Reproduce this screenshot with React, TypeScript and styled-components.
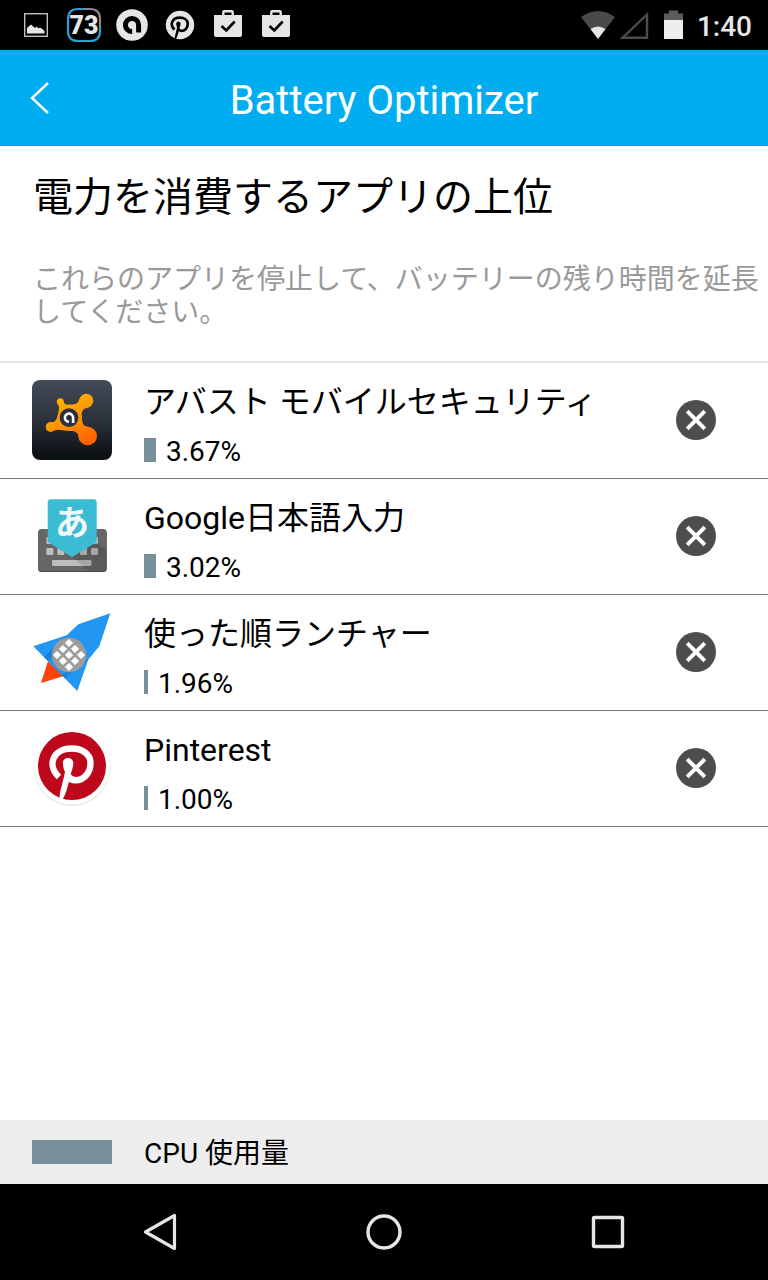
import React from "react";
import styled, { createGlobalStyle } from "styled-components";

const GlobalStyle = createGlobalStyle`
  *, *::before, *::after { box-sizing: border-box; }
  body {
    margin: 0;
    background: #fff;
    color: #000;
    font-family: Roboto, "Noto Sans CJK JP", sans-serif;
  }
  h1, h2, p, ul { margin: 0; padding: 0; font-weight: 400; }
  button { border: 0; padding: 0; background: none; color: inherit; font: inherit; cursor: pointer; }
  svg { display: block; }
`;

const Page = styled.div`
  display: flex;
  flex-direction: column;
  min-height: 100vh;
`;

const StatusBar = styled.div`
  display: flex;
  align-items: center;
  justify-content: space-between;
  height: 50px;
  padding: 0 16px 0 12px;
  background: #000;
  color: #e6e6e6;
`;

const StatusGroup = styled.div<{ $gap?: number }>`
  display: flex;
  align-items: center;
  gap: ${({ $gap = 0 }) => $gap}px;
`;

const StatusIcon = styled.svg`
  width: 48px;
  height: 48px;
`;

const Clock = styled.time`
  padding-top: 4px;
  font-size: 28px;
  font-weight: 500;
  line-height: 32px;
`;

const AppBar = styled.header`
  display: grid;
  grid-template-columns: 80px 1fr 80px;
  align-items: center;
  height: 96px;
  background: #00adf0;
  color: #fff;
`;

const BackButton = styled.button`
  width: 80px;
  height: 96px;
`;

const BarTitle = styled.h1`
  padding-top: 6px;
  font-size: 40px;
  line-height: 48px;
  text-align: center;
`;

const Intro = styled.section`
  padding: 24px 0 32px 33px;
  border-bottom: 2px solid #e6e6e6;
`;

const IntroTitle = styled.h2`
  font-size: 40px;
  line-height: 56px;
`;

const IntroText = styled.p`
  margin-top: 37px;
  color: #999;
  font-size: 28px;
  line-height: 33px;
`;

const AppList = styled.ul`
  flex: 1;
  list-style: none;
`;

const AppRow = styled.li`
  display: flex;
  align-items: center;
  height: 116px;
  padding: 0 52px 2px 32px;
  border-bottom: 1px solid #777;
`;

const AppIcon = styled.svg`
  flex: none;
  width: 80px;
  height: 80px;
`;

const AppInfo = styled.div`
  flex: 1;
  min-width: 0;
  padding: 10px 16px 0 32px;
`;

const AppName = styled.div`
  font-size: 32px;
  line-height: 48px;
`;

const Usage = styled.div`
  display: flex;
  align-items: flex-start;
  gap: 10px;
  margin-top: 6px;
  font-size: 28px;
  line-height: 40px;
`;

const UsageBar = styled.span`
  height: 24px;
  margin-top: 6px;
  background: #78909a;
`;

const StopButton = styled.button`
  flex: none;
  width: 40px;
  height: 40px;
`;

const Legend = styled.footer`
  display: flex;
  align-items: center;
  gap: 32px;
  height: 64px;
  padding: 0 32px;
  background: #eee;
`;

const LegendSwatch = styled.span`
  width: 80px;
  height: 24px;
  background: #78909a;
`;

const LegendLabel = styled.span`
  padding-top: 4px;
  font-size: 28px;
  line-height: 40px;
`;

const NavBar = styled.nav`
  display: flex;
  height: 96px;
  padding: 0 48px;
  background: #000;
`;

const NavButton = styled.button`
  display: flex;
  flex: 1;
  align-items: center;
  justify-content: center;
`;

const PinGlyph = ({ color }: { color: string }) => (
  <>
    <path
      d="M27 49C15 38 20 20.5 39.7 20.5C50 20.5 58.5 26 58.5 35C58.5 46 51 52.3 43.5 52.3C39.5 52.3 37.5 50.5 36 48"
      fill="none"
      stroke={color}
      strokeWidth="6.4"
    />
    <path
      d="M31 36C30 28.5 41 28 41.3 35C41.3 40 39 44 38 49C36 58 34 66 31 70.5C29.5 72 27.4 71.5 27.5 69C28 62 31 54 33 44C32 42 31.2 39 31 36Z"
      fill={color}
    />
  </>
);

const AvastIcon = () => (
  <AppIcon viewBox="0 0 80 80" aria-hidden="true">
    <defs>
      <linearGradient id="avast-bg" x1="0" y1="0" x2="0" y2="1">
        <stop offset="0" stopColor="#454b59" />
        <stop offset="0.5" stopColor="#2b323b" />
        <stop offset="1" stopColor="#080d10" />
      </linearGradient>
      <linearGradient id="avast-body" gradientUnits="userSpaceOnUse" x1="30" y1="16" x2="52" y2="64">
        <stop offset="0" stopColor="#ffb400" />
        <stop offset="0.5" stopColor="#ff9300" />
        <stop offset="1" stopColor="#ff6000" />
      </linearGradient>
    </defs>
    <rect width="80" height="80" rx="8" fill="url(#avast-bg)" />
    <g fill="url(#avast-body)">
      <circle cx="54.3" cy="20.7" r="7" />
      <circle cx="55.7" cy="56" r="9.3" />
      <circle cx="18.7" cy="47" r="5" />
      <circle cx="28.3" cy="21.8" r="3.5" />
      <path d="M31.7 21C31.8 25 35 24.8 40 24.5C46 24.5 46.5 21 48 18L57 27.2C51 28.5 49 31 50 37C50 43 51 46.5 57 46.8L46.5 57C46.5 52 42 50.5 37 51C31 51 26 48.5 22 50.7L19 42C24 43 25 38 26 34C27.5 29 27.5 26 25.4 23.5Z" />
    </g>
    <circle cx="37" cy="37.7" r="9.4" fill="#29303b" />
    <path d="M37 41.8A4.1 4.1 0 1 1 41.1 37.4V43" fill="none" stroke="#fff" strokeWidth="2.6" />
  </AppIcon>
);

const KeyboardIcon = () => (
  <AppIcon viewBox="0 0 80 80" aria-hidden="true">
    <rect x="6" y="34" width="68.7" height="42" rx="3.5" fill="#484848" />
    <rect x="6" y="33" width="68.7" height="42" rx="3.5" fill="#666" />
    <g fill="#bdbdbd">
      {[14.3, 25.3, 36.3, 48, 59].map((x) => (
        <React.Fragment key={x}>
          <rect x={x} y="41" width="7" height="7" rx="1" />
          <rect x={x} y="52" width="7" height="7" rx="1" />
        </React.Fragment>
      ))}
      <rect x="20" y="64" width="39.4" height="6" rx="1" />
    </g>
    <path d="M40 61L64.7 46L74.7 55V75H57Z" fill="#000" opacity="0.12" />
    <path d="M18.7 3.3H61.7Q64.7 3.3 64.7 6.3V44.5Q64.7 46 63 47L40 61L17.4 47Q15.7 46 15.7 44.5V6.3Q15.7 3.3 18.7 3.3Z" fill="#3bbcd2" />
    <text x="40" y="39" textAnchor="middle" fontFamily='"Noto Sans CJK JP", sans-serif' fontSize="34" fontWeight="700" fill="#f1f8fa">
      あ
    </text>
  </AppIcon>
);

const diamonds = [
  [37, 31], [31, 37], [43, 37],
  [25, 43], [37, 43], [49, 43],
  [31, 49], [43, 49], [37, 55],
];

const RocketIcon = () => (
  <AppIcon viewBox="0 0 80 80" aria-hidden="true">
    <path d="M16 49L9 71L32 64Z" fill="#ff4306" />
    <path d="M78.3 1.3L46.3 12.3L34.7 23.3L1.3 34.3L45.3 79L56.3 47.5L67.3 34.3Z" fill="#2196f3" />
    <path d="M34.7 23.3L12 45L16 49L30 34ZM56.3 47.5L33 66L29.5 63L45 52Z" fill="#1976c8" opacity="0.65" />
    <circle cx="37" cy="43" r="17.2" fill="#9c9c9c" />
    {diamonds.map(([x, y]) => (
      <path
        key={`${x}-${y}`}
        d={`M${x} ${y - 3.6}L${x + 3.6} ${y}L${x} ${y + 3.6}L${x - 3.6} ${y}Z`}
        fill="#fff"
        stroke="#fff"
        strokeWidth="1"
        strokeLinejoin="round"
      />
    ))}
  </AppIcon>
);

const PinterestIcon = () => (
  <AppIcon viewBox="0 0 80 80" aria-hidden="true">
    <circle cx="40" cy="40" r="38" fill="#c9c9c9" />
    <circle cx="40" cy="39.4" r="38.4" fill="#ededed" />
    <circle cx="40" cy="38.3" r="38" fill="#fff" />
    <circle cx="40" cy="38" r="34" fill="#bd081c" />
    <PinGlyph color="#fff" />
  </AppIcon>
);

const BagIcon = () => (
  <StatusIcon viewBox="0 0 48 48" aria-hidden="true">
    <path d="M19.3 15V11.3Q19.3 10.3 20.3 10.3H27.7Q28.7 10.3 28.7 11.3V15" fill="none" stroke="#e6e6e6" strokeWidth="2.4" />
    <path d="M10 14H38V34Q38 36 36 36H12Q10 36 10 34Z" fill="#e6e6e6" />
    <path d="M17.5 25L22.3 29.5L30.7 20.5" fill="none" stroke="#000" strokeWidth="2.6" />
  </StatusIcon>
);

const apps = [
  { name: "アバスト モバイルセキュリティ", usage: 3.67, bar: 12, Icon: AvastIcon },
  { name: "Google日本語入力", usage: 3.02, bar: 12, Icon: KeyboardIcon },
  { name: "使った順ランチャー", usage: 1.96, bar: 4, Icon: RocketIcon },
  { name: "Pinterest", usage: 1, bar: 4, Icon: PinterestIcon },
];

export default function App() {
  return (
    <Page>
      <GlobalStyle />
      <StatusBar>
        <StatusGroup>
          <StatusIcon viewBox="0 0 48 48" aria-hidden="true">
            <rect x="12.7" y="12.7" width="22.6" height="22.6" fill="none" stroke="#bdbdbd" strokeWidth="1.4" />
            <path d="M15 32.5V27L19 23.5L23 27L24.5 25.5L26 27H29L32.5 30V32.5Z" fill="#e6e6e6" />
          </StatusIcon>
          <StatusIcon viewBox="0 0 48 48" aria-hidden="true">
            <path d="M24 8H18Q8 8 8 18V30Q8 40 18 40H30Q40 40 40 30V26" fill="none" stroke="#2c9fd0" strokeWidth="2.2" />
            <path d="M24 8H30Q40 8 40 18V26" fill="none" stroke="#888" strokeWidth="2.2" />
            <text x="24" y="33" textAnchor="middle" fontFamily="Roboto, sans-serif" fontWeight="900" fontSize="25" fill="#e6e6e6">
              73
            </text>
          </StatusIcon>
          <StatusIcon viewBox="0 0 48 48" aria-hidden="true">
            <circle cx="24" cy="24" r="15.8" fill="#e6e6e6" />
            <path d="M24.2 30.6A6.6 6.6 0 1 1 30.6 24V31.6" fill="none" stroke="#000" strokeWidth="5" />
          </StatusIcon>
          <StatusIcon viewBox="0 0 48 48" aria-hidden="true">
            <circle cx="24" cy="24" r="14.2" fill="#e6e6e6" />
            <g transform="translate(7.2 8) scale(0.42)">
              <PinGlyph color="#000" />
            </g>
          </StatusIcon>
          <BagIcon />
          <BagIcon />
        </StatusGroup>
        <StatusGroup $gap={14}>
          <svg width="102" height="48" viewBox="0 0 102 48" aria-hidden="true">
            <path d="M0 16Q17 4 34 16L17 38Z" fill="#4a4a4a" />
            <path d="M9.5 28Q17 23 24.5 28L17 38Z" fill="#e6e6e6" />
            <path d="M41.5 36.8L66 13.5V36.8Z" fill="none" stroke="#4a4a4a" strokeWidth="2.4" />
            <path d="M83 12.5H88V9.5H97V12.5H102V19H83Z" fill="#5c5c5c" />
            <path d="M83 19H102V38H83Z" fill="#eee" />
          </svg>
          <Clock>1:40</Clock>
        </StatusGroup>
      </StatusBar>

      <AppBar>
        <BackButton aria-label="戻る">
          <svg width="80" height="96" viewBox="0 0 80 96" aria-hidden="true">
            <path d="M48 33L32 48L48 63" fill="none" stroke="#fff" strokeWidth="2.4" />
          </svg>
        </BackButton>
        <BarTitle>Battery Optimizer</BarTitle>
      </AppBar>

      <Intro>
        <IntroTitle>電力を消費するアプリの上位</IntroTitle>
        <IntroText>これらのアプリを停止して、バッテリーの残り時間を延長してください。</IntroText>
      </Intro>

      <AppList>
        {apps.map(({ name, usage, bar, Icon }) => (
          <AppRow key={name}>
            <Icon />
            <AppInfo>
              <AppName>{name}</AppName>
              <Usage>
                <UsageBar style={{ width: bar }} />
                <span>{usage.toFixed(2)}%</span>
              </Usage>
            </AppInfo>
            <StopButton aria-label={`${name} を停止`}>
              <svg width="40" height="40" viewBox="0 0 40 40" aria-hidden="true">
                <circle cx="20" cy="20" r="20" fill="#4d4d4d" />
                <path d="M11.2 11.2L28.8 28.8M28.8 11.2L11.2 28.8" stroke="#fff" strokeWidth="4" />
              </svg>
            </StopButton>
          </AppRow>
        ))}
      </AppList>

      <Legend>
        <LegendSwatch />
        <LegendLabel>CPU 使用量</LegendLabel>
      </Legend>

      <NavBar>
        <NavButton aria-label="戻る">
          <svg width="40" height="40" viewBox="0 0 40 40" aria-hidden="true">
            <path d="M5.5 20L34.5 3.5V36.5Z" fill="none" stroke="#e6e6e6" strokeWidth="3.2" strokeLinejoin="round" />
          </svg>
        </NavButton>
        <NavButton aria-label="ホーム">
          <svg width="40" height="40" viewBox="0 0 40 40" aria-hidden="true">
            <circle cx="20" cy="20" r="16" fill="none" stroke="#e6e6e6" strokeWidth="3.4" />
          </svg>
        </NavButton>
        <NavButton aria-label="最近使ったアプリ">
          <svg width="40" height="40" viewBox="0 0 40 40" aria-hidden="true">
            <rect x="5.5" y="5.5" width="29" height="29" rx="1" fill="none" stroke="#e6e6e6" strokeWidth="3.4" />
          </svg>
        </NavButton>
      </NavBar>
    </Page>
  );
}
